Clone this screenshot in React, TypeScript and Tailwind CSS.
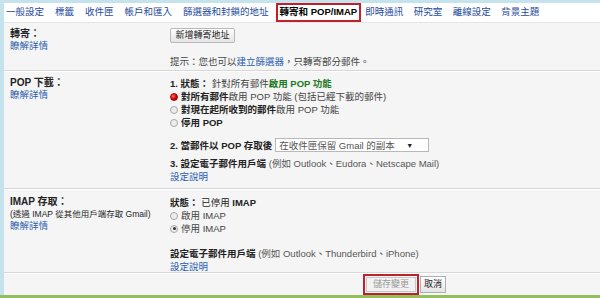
const FONT = "font-['Liberation_Sans','Noto_Sans_CJK_TC',sans-serif]";

const tabsLeft = ["一般設定", "標籤", "收件匣", "帳戶和匯入", "篩選器和封鎖的地址"];
const tabsRight = ["即時通訊", "研究室", "離線設定", "背景主題"];

function Radio({ kind }: { kind: "red" | "off" | "on" }) {
  if (kind === "red") {
    return (
      <span className="w-[8px] h-[8px] rounded-full bg-[radial-gradient(circle_at_35%_35%,#ff6b6b,#c00000_60%,#900)] border border-[#a00] shrink-0" />
    );
  }
  return (
    <span className="w-[8px] h-[8px] rounded-full border border-[#a8a8a8] bg-[#ececec] flex items-center justify-center shrink-0">
      {kind === "on" && <span className="w-[3px] h-[3px] rounded-full bg-[#333]" />}
    </span>
  );
}

function Link({ children }: { children: React.ReactNode }) {
  return <span className="text-[#2a5db0]">{children}</span>;
}

export default function App() {
  return (
    <div className={`${FONT} w-[600px] h-[298px] bg-[#c4e3ec] pt-[3px] pl-[4px] flex flex-col overflow-hidden text-[9.5px] text-[#222]`}>
      {/* tabs */}
      <div className="h-[19px] bg-white flex items-center text-[9.5px] text-[#1e4a9c] pl-[2px] shrink-0">
        <div className="flex gap-[11px]">
          {tabsLeft.map((t) => (
            <span key={t}>{t}</span>
          ))}
        </div>
        <div className="ml-[7px] h-[19px] px-[2px] border-2 border-[#c0202a] text-black font-bold flex items-center">
          轉寄和 POP/IMAP
        </div>
        <div className="flex gap-[10.5px] ml-[4px]">
          {tabsRight.map((t) => (
            <span key={t}>{t}</span>
          ))}
        </div>
      </div>

      {/* content */}
      <div className="flex-1 bg-[#f5f5f5] flex flex-col border-t border-[#e6e6e6]">
        {/* forwarding */}
        <div className="flex h-[48px] pt-[5px] border-b border-[#d8d8d8]">
          <div className="w-[166px] pl-[6px] leading-[12px]">
            <div className="font-bold text-[10px]">轉寄：</div>
            <Link>瞭解詳情</Link>
          </div>
          <div className="flex flex-col">
            <button className="h-[15px] w-[65px] border border-[#b8b8b8] rounded-[2px] bg-gradient-to-b from-white to-[#e4e4e4] text-[9px] text-[#222]">
              新增轉寄地址
            </button>
            <div className="mt-[12px] text-[#444]">
              提示：您也可以<Link>建立篩選器</Link>，只轉寄部分郵件。
            </div>
          </div>
        </div>

        {/* POP */}
        <div className="flex h-[118px] pt-[5px] border-b border-[#d8d8d8] border-t border-t-white">
          <div className="w-[166px] pl-[6px] leading-[12px]">
            <div className="font-bold text-[10px]">POP 下載：</div>
            <Link>瞭解詳情</Link>
          </div>
          <div className="flex flex-col leading-[13px]">
            <div>
              <span className="font-bold">1. 狀態：</span>
              <span className="text-[#444]"> 針對所有郵件</span>
              <span className="font-bold text-[#1a7a1a]">啟用 POP 功能</span>
            </div>
            <div className="flex items-center gap-[3px]">
              <Radio kind="red" />
              <span>
                <span className="font-bold">對所有郵件</span>
                <span className="text-[#444]">啟用 POP 功能 (包括已經下載的郵件)</span>
              </span>
            </div>
            <div className="flex items-center gap-[3px]">
              <Radio kind="off" />
              <span>
                <span className="font-bold">對現在起所收到的郵件</span>
                <span className="text-[#444]">啟用 POP 功能</span>
              </span>
            </div>
            <div className="flex items-center gap-[3px]">
              <Radio kind="off" />
              <span className="font-bold">停用 POP</span>
            </div>
            <div className="flex items-center mt-[9px]">
              <span className="font-bold mr-[3px]">2. 當郵件以 POP 存取後</span>
              <div className="w-[154px] h-[14px] border border-[#b8b8b8] bg-white flex items-center px-[3px] text-[#555]">
                <span className="flex-1">在收件匣保留 Gmail 的副本</span>
                <span className="text-[7px] text-[#222] mr-[12px]">▼</span>
              </div>
            </div>
            <div className="mt-[5px]">
              <span className="font-bold">3. 設定電子郵件用戶端</span>
              <span className="text-[#555]"> (例如 Outlook、Eudora、Netscape Mail)</span>
            </div>
            <Link>設定說明</Link>
          </div>
        </div>

        {/* IMAP */}
        <div className="flex h-[84px] pt-[6px] border-b border-[#d8d8d8] border-t border-t-white">
          <div className="w-[166px] pl-[6px] leading-[12px]">
            <div className="font-bold text-[10px]">IMAP 存取：</div>
            <div className="text-[8.5px]">(透過 IMAP 從其他用戶端存取 Gmail)</div>
            <Link>瞭解詳情</Link>
          </div>
          <div className="flex flex-col leading-[13px]">
            <div>
              <span className="font-bold">狀態：</span>
              <span> 已停用 </span>
              <span className="font-bold">IMAP</span>
            </div>
            <div className="flex items-center gap-[3px]">
              <Radio kind="off" />
              <span className="text-[#444]">啟用 IMAP</span>
            </div>
            <div className="flex items-center gap-[3px]">
              <Radio kind="on" />
              <span className="text-[#444]">停用 IMAP</span>
            </div>
            <div className="mt-[12px]">
              <span className="font-bold">設定電子郵件用戶端</span>
              <span className="text-[#555]"> (例如 Outlook、Thunderbird、iPhone)</span>
            </div>
            <Link>設定說明</Link>
          </div>
        </div>

        {/* actions */}
        <div className="flex-1 flex items-end pl-[359px] gap-[1px] border-t border-t-white">
          <div className="border-2 border-[#c0202a] p-[1px]">
            <button className="h-[15px] px-[6px] border border-[#c8c8c8] bg-[#f2f2f2] text-[#999] text-[9px] leading-none">
              儲存變更
            </button>
          </div>
          <button className="h-[17px] mb-[2px] px-[3px] border border-[#b0b0b0] bg-gradient-to-b from-white to-[#e4e4e4] text-[9px] leading-none">
            取消
          </button>
        </div>
      </div>
      <div className="h-[4px] bg-[#8fbf5f] -ml-[4px] shrink-0" />
    </div>
  );
}
